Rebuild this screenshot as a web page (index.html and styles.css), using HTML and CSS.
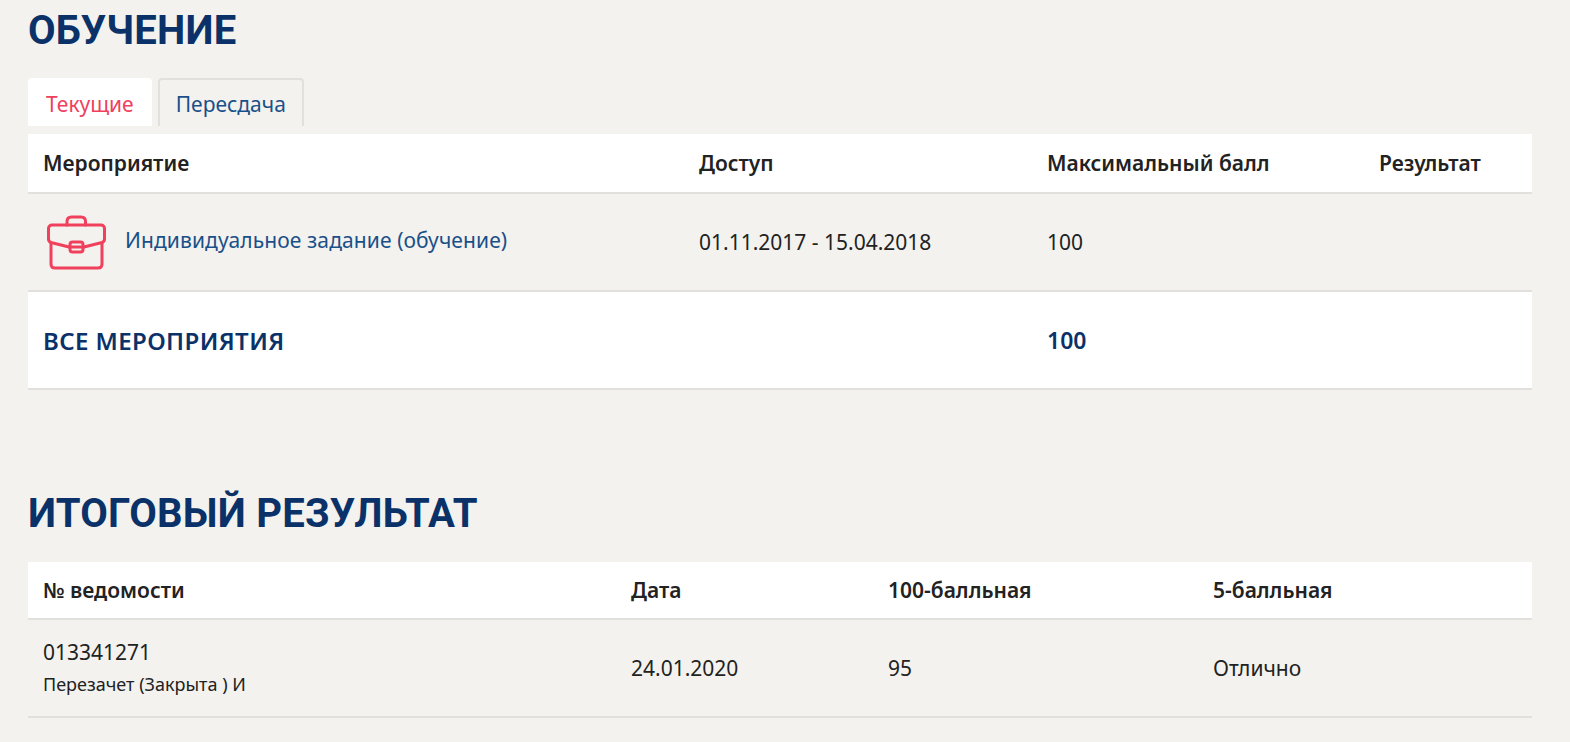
FILE: index.html
```html
<!DOCTYPE html>
<html lang="ru">
<head>
    <meta charset="UTF-8">
    <title>Обучение</title>
    <link rel="stylesheet" href="styles.css">
</head>
<body>
    <div class="container">
        <h1>Обучение</h1>
        <div class="tabs">
            <a class="tab active" href="#">Текущие</a>
            <a class="tab" href="#">Пересдача</a>
        </div>
        <table class="grid events">
            <thead>
                <tr>
                    <th class="col-event">Мероприятие</th>
                    <th class="col-access">Доступ</th>
                    <th class="col-max">Максимальный балл</th>
                    <th>Результат</th>
                </tr>
            </thead>
            <tbody>
                <tr>
                    <td>
                        <div class="event">
                            <svg class="event-icon" viewBox="0 0 60 56" fill="none" stroke="#f0405c" stroke-width="3" stroke-linejoin="round" stroke-linecap="round">
                                <path d="M21 11V7.500C21 4.500 23 3 25.500 3H35C37.500 3 39.500 4.500 39.500 7.500V11"/>
                                <path d="M6 11H55C57 11 58.500 12.500 58.500 14.500V25C58.500 27 57.500 28 56 28.500L38 33H23L5 28.500C3.500 28 2.500 27 2.500 25V14.500C2.500 12.500 4 11 6 11Z"/>
                                <path d="M5 29V50C5 52.500 6.500 54 9 54H52C54.500 54 56 52.500 56 50V29"/>
                                <rect x="24" y="28" width="13" height="10" rx="2.500"/>
                            </svg>
                            <a href="#">Индивидуальное задание (обучение)</a>
                        </div>
                    </td>
                    <td>01.11.2017 - 15.04.2018</td>
                    <td>100</td>
                    <td></td>
                </tr>
                <tr class="total">
                    <td class="total-label">ВСЕ МЕРОПРИЯТИЯ</td>
                    <td></td>
                    <td>100</td>
                    <td></td>
                </tr>
            </tbody>
        </table>

        <h1 class="second">Итоговый результат</h1>
        <table class="grid results">
            <thead>
                <tr>
                    <th class="col-num">№ ведомости</th>
                    <th class="col-date">Дата</th>
                    <th class="col-hundred">100-балльная</th>
                    <th>5-балльная</th>
                </tr>
            </thead>
            <tbody>
                <tr>
                    <td class="sheet">013341271<div class="sub">Перезачет (Закрыта ) И</div></td>
                    <td>24.01.2020</td>
                    <td>95</td>
                    <td>Отлично</td>
                </tr>
            </tbody>
        </table>
        <div class="next-row">013341272</div>
    </div>
</body>
</html>
```

FILE: styles.css
```css
* {
    margin: 0;
    padding: 0;
    box-sizing: border-box;
}

html, body {
    height: 742px;
    overflow: hidden;
}

body {
    font-family: 'Noto Sans', 'Open Sans', sans-serif;
    background: #f3f2ef;
    color: #222;
    font-size: 21px;
}

.container {
    padding: 0 38px 0 28px;
}

h1 {
    font-family: 'Roboto', sans-serif;
    font-size: 40px;
    font-weight: 700;
    letter-spacing: 0.25px;
    line-height: 44px;
    padding-top: 9px;
    color: #0b3268;
    text-transform: uppercase;
}

h1.second {
    margin-top: 93px;
    padding-top: 9px;
}

.tabs {
    display: flex;
    gap: 6px;
    margin-top: 25px;
}

.tab {
    height: 48px;
    padding: 0 16px;
    font-size: 21px;
    line-height: 48px;
    color: #1a5088;
    text-decoration: none;
    border: 2px solid #e2e0dc;
    border-bottom: none;
    border-radius: 4px 4px 0 0;
}

.tab.active {
    background: #fff;
    color: #f0405c;
    border-color: #fff;
}

.grid {
    width: 100%;
    table-layout: fixed;
    border-collapse: collapse;
    margin-top: 8px;
}

.grid th {
    height: 59px;
    padding: 0 15px;
    background: #fff;
    text-align: left;
    font-weight: 600;
    font-size: 21px;
    border-bottom: 2px solid #e2e0dc;
}

.grid td {
    height: 98px;
    padding: 0 15px;
    font-size: 21px;
    border-bottom: 2px solid #e2e0dc;
    vertical-align: middle;
}

.col-event { width: 656px; }
.col-access { width: 348px; }
.col-max { width: 332px; }
.col-num { width: 588px; }
.col-date { width: 257px; }
.col-hundred { width: 325px; }

.results {
    margin-top: 26px;
}

.grid.results th {
    height: 57px;
}

.event {
    display: flex;
    align-items: center;
    gap: 18px;
}

.event-icon {
    width: 62px;
    height: 56px;
    margin-left: 2px;
    flex-shrink: 0;
}

.event a {
    color: #1a5088;
    text-decoration: none;
    letter-spacing: 0.1px;
    margin-bottom: 4px;
}

.grid .total td {
    background: #fff;
    color: #0b3268;
    font-weight: 600;
    font-size: 23px;
}

.grid .total .total-label {
    font-size: 24px;
    letter-spacing: 0.4px;
}

.grid .sheet {
    padding-bottom: 2px;
}

.sub {
    font-size: 18px;
    margin-top: 6px;
}

.next-row {
    padding: 21px 15px 0;
    line-height: 28px;
}
```
